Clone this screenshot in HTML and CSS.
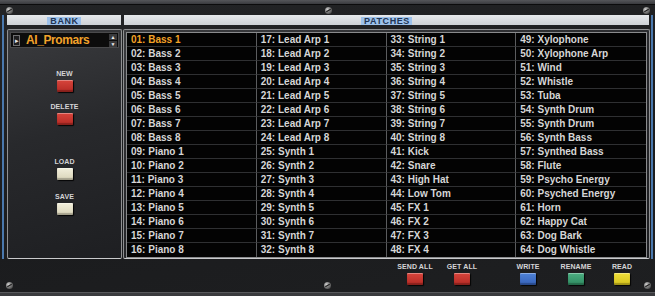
FILE: index.html
```html
<!DOCTYPE html>
<html lang="en">
<head>
    <meta charset="UTF-8">
    <meta name="viewport" content="width=device-width, initial-scale=1.0">
    <title>Promars Librarian</title>
    <link rel="stylesheet" href="styles.css">
</head>
<body>
<div class="device">
    <div class="top-strip"></div>
    <div class="screw-row">
        <span class="screw"></span>
        <span class="screw"></span>
        <span class="screw"></span>
    </div>

    <div class="main">
        <div class="header"><span class="header-label">BANK</span></div>
        <div class="header"><span class="header-label">PATCHES</span></div>

        <!-- Bank panel -->
        <div class="panel bank">
            <div class="bank-select">
                <span class="bank-arrow">&#9656;</span>
                <span class="bank-name">AI_Promars</span>
                <span class="bank-spin">
                    <span class="spin-btn">&#9650;</span>
                    <span class="spin-btn">&#9660;</span>
                </span>
            </div>
            <div class="tool tool-new">
                <span class="tool-label">NEW</span>
                <span class="btn btn-red"></span>
            </div>
            <div class="tool tool-delete">
                <span class="tool-label">DELETE</span>
                <span class="btn btn-red"></span>
            </div>
            <div class="tool tool-load">
                <span class="tool-label">LOAD</span>
                <span class="btn btn-cream"></span>
            </div>
            <div class="tool tool-save">
                <span class="tool-label">SAVE</span>
                <span class="btn btn-cream"></span>
            </div>
        </div>

        <!-- Patch list -->
        <div class="panel patches">
            <div class="patch-grid">
                <div class="patch selected">01: Bass 1</div>
                <div class="patch">02: Bass 2</div>
                <div class="patch">03: Bass 3</div>
                <div class="patch">04: Bass 4</div>
                <div class="patch">05: Bass 5</div>
                <div class="patch">06: Bass 6</div>
                <div class="patch">07: Bass 7</div>
                <div class="patch">08: Bass 8</div>
                <div class="patch">09: Piano 1</div>
                <div class="patch">10: Piano 2</div>
                <div class="patch">11: Piano 3</div>
                <div class="patch">12: Piano 4</div>
                <div class="patch">13: Piano 5</div>
                <div class="patch">14: Piano 6</div>
                <div class="patch">15: Piano 7</div>
                <div class="patch">16: Piano 8</div>

                <div class="patch">17: Lead Arp 1</div>
                <div class="patch">18: Lead Arp 2</div>
                <div class="patch">19: Lead Arp 3</div>
                <div class="patch">20: Lead Arp 4</div>
                <div class="patch">21: Lead Arp 5</div>
                <div class="patch">22: Lead Arp 6</div>
                <div class="patch">23: Lead Arp 7</div>
                <div class="patch">24: Lead Arp 8</div>
                <div class="patch">25: Synth 1</div>
                <div class="patch">26: Synth 2</div>
                <div class="patch">27: Synth 3</div>
                <div class="patch">28: Synth 4</div>
                <div class="patch">29: Synth 5</div>
                <div class="patch">30: Synth 6</div>
                <div class="patch">31: Synth 7</div>
                <div class="patch">32: Synth 8</div>

                <div class="patch">33: String 1</div>
                <div class="patch">34: String 2</div>
                <div class="patch">35: String 3</div>
                <div class="patch">36: String 4</div>
                <div class="patch">37: String 5</div>
                <div class="patch">38: String 6</div>
                <div class="patch">39: String 7</div>
                <div class="patch">40: String 8</div>
                <div class="patch">41: Kick</div>
                <div class="patch">42: Snare</div>
                <div class="patch">43: High Hat</div>
                <div class="patch">44: Low Tom</div>
                <div class="patch">45: FX 1</div>
                <div class="patch">46: FX 2</div>
                <div class="patch">47: FX 3</div>
                <div class="patch">48: FX 4</div>

                <div class="patch">49: Xylophone</div>
                <div class="patch">50: Xylophone Arp</div>
                <div class="patch">51: Wind</div>
                <div class="patch">52: Whistle</div>
                <div class="patch">53: Tuba</div>
                <div class="patch">54: Synth Drum</div>
                <div class="patch">55: Synth Drum</div>
                <div class="patch">56: Synth Bass</div>
                <div class="patch">57: Synthed Bass</div>
                <div class="patch">58: Flute</div>
                <div class="patch">59: Psycho Energy</div>
                <div class="patch">60: Psyched Energy</div>
                <div class="patch">61: Horn</div>
                <div class="patch">62: Happy Cat</div>
                <div class="patch">63: Dog Bark</div>
                <div class="patch">64: Dog Whistle</div>
            </div>
        </div>
    </div>

    <div class="bottom-row">
        <span class="screw"></span>
        <span class="screw screw-mid"></span>
        <div class="tool tool-send">
            <span class="tool-label">SEND ALL</span>
            <span class="btn btn-red"></span>
        </div>
        <div class="tool tool-get">
            <span class="tool-label">GET ALL</span>
            <span class="btn btn-red"></span>
        </div>
        <div class="tool tool-write">
            <span class="tool-label">WRITE</span>
            <span class="btn btn-blue"></span>
        </div>
        <div class="tool tool-rename">
            <span class="tool-label">RENAME</span>
            <span class="btn btn-green"></span>
        </div>
        <div class="tool tool-read">
            <span class="tool-label">READ</span>
            <span class="btn btn-yellow"></span>
        </div>
        <span class="screw screw-end"></span>
    </div>
    <div class="bottom-strip"></div>
</div>
</body>
</html>
```

FILE: styles.css
```css
/* Global */
* {
    margin: 0;
    padding: 0;
    box-sizing: border-box;
    font-family: "Liberation Sans", Arial, sans-serif;
}

body {
    background-color: #1c1d1f;
    width: 655px;
    height: 296px;
    overflow: hidden;
}

.device {
    width: 655px;
    height: 296px;
    display: flex;
    flex-direction: column;
    background: linear-gradient(170deg, #232426 0%, #1b1c1e 60%, #1e1f21 100%);
}

.top-strip {
    height: 5px;
    background: linear-gradient(#55565a, #393a3e);
    border-bottom: 1px solid #0b0b0c;
}

.screw-row {
    height: 10px;
    display: flex;
    justify-content: space-between;
    align-items: center;
    padding: 0 5px 0 6px;
}

/* Screw heads */
.screw {
    position: relative;
    width: 7px;
    height: 7px;
    border-radius: 50%;
    background: radial-gradient(circle at 35% 35%, #d0d0d0 0%, #7c7c7c 45%, #2e2e2e 100%);
    flex-shrink: 0;
}

.screw::after {
    content: "";
    position: absolute;
    left: 1px;
    top: 3px;
    width: 5px;
    height: 1px;
    background: #1a1a1a;
    transform: rotate(-30deg);
}

/* Main area with the blue rails */
.main {
    height: 244px;
    margin: 0 2px;
    border-left: 2px solid #4a78ad;
    border-right: 2px solid #4a78ad;
    padding: 0 1px 0 3px;
    display: grid;
    grid-template-columns: 115px 527px;
    grid-template-rows: 10px 230px;
    column-gap: 1px;
    row-gap: 4px;
}

.header {
    background: linear-gradient(#e6e9ec, #cdd1d5);
    display: flex;
    justify-content: center;
    align-items: flex-end;
    margin-right: 1px;
}

.header:nth-child(2) {
    margin-left: 1px;
}

.header-label {
    height: 8px;
    line-height: 9px;
    padding: 0 2px 0 3px;
    background-color: #9dc1ea;
    color: #223655;
    font-size: 9px;
    font-weight: bold;
    letter-spacing: 0.6px;
    overflow: hidden;
}

.panel {
    border: 1px solid #8f9092;
    border-bottom-color: #c9cacc;
    border-radius: 2px;
    background: linear-gradient(165deg, #3a3b3e 0%, #28292c 45%, #1e1f22 100%);
}

/* Bank panel */
.bank {
    padding: 2px;
    display: flex;
    flex-direction: column;
}

.bank-select {
    height: 16px;
    background-color: #0c0c0c;
    border: 1px solid #4a4a4c;
    display: flex;
    align-items: center;
    padding: 0 1px 0 2px;
}

.bank-arrow {
    width: 7px;
    height: 11px;
    border: 1px solid #6e6e70;
    background: #1e1e20;
    color: #e8e8e8;
    font-size: 7px;
    line-height: 9px;
    text-align: center;
}

.bank-name {
    flex: 1;
    margin-left: 6px;
    color: #f2a22a;
    font-size: 12px;
    font-weight: bold;
    letter-spacing: -0.4px;
}

.bank-spin {
    display: flex;
    flex-direction: column;
    gap: 1px;
}

.spin-btn {
    width: 8px;
    height: 6px;
    background: #3a3a3c;
    color: #f0f0f0;
    font-size: 5px;
    line-height: 6px;
    text-align: center;
}

/* Labelled buttons */
.tool {
    display: flex;
    flex-direction: column;
    align-items: center;
    gap: 2px;
}

.tool-label {
    height: 8px;
    line-height: 8px;
    font-size: 7px;
    font-weight: bold;
    color: #d4d4d6;
    letter-spacing: 0.1px;
    white-space: nowrap;
}

.btn {
    width: 16px;
    height: 12px;
    border-radius: 1px;
    box-shadow: 1px 1px 1px #050505, inset 0 1px 0 rgba(255, 255, 255, 0.35), inset 0 -2px 1px rgba(0, 0, 0, 0.25);
}

.btn-red {
    background: linear-gradient(#d8453c, #b42a24);
}

.btn-cream {
    background: linear-gradient(#f2efdc, #d9d4b8);
}

.btn-blue {
    background: linear-gradient(#4f83d8, #3561b8);
}

.btn-green {
    background: linear-gradient(#4cae82, #2f8a60);
}

.btn-yellow {
    background: linear-gradient(#f0df3a, #d4c21c);
}

.tool-new { margin-top: 22px; }
.tool-delete { margin-top: 11px; }
.tool-load { margin-top: 33px; }
.tool-save { margin-top: 13px; }

/* Patch grid */
.patches {
    padding: 2px 2px 0;
}

.patch-grid {
    border: 1px solid #8a8b8d;
    background-color: #030303;
    display: grid;
    grid-template-columns: repeat(4, 1fr);
    grid-template-rows: repeat(16, 14px);
    grid-auto-flow: column;
}

.patch {
    border-bottom: 1px solid #2f3032;
    border-right: 1px solid #5b5c5e;
    padding-left: 4px;
    line-height: 13px;
    font-size: 10px;
    font-weight: bold;
    color: #d6d6d6;
    white-space: nowrap;
    overflow: hidden;
}

.patch:nth-child(16n) {
    border-bottom: none;
}

.patch:nth-child(n+49) {
    border-right: none;
}

.patch.selected {
    color: #f2a227;
}

/* Bottom controls */
.bottom-row {
    height: 33px;
    display: flex;
    align-items: flex-start;
    padding-left: 6px;
}

.bottom-row .screw {
    margin-top: 23px;
}

.bottom-row .screw-mid {
    margin-left: 311px;
}

.bottom-row .tool {
    width: 40px;
    margin-top: 4px;
}

.tool-send { margin-left: 64px; }
.tool-get { margin-left: 7px; }
.tool-write { margin-left: 26px; }
.tool-rename { margin-left: 8px; }
.tool-read { margin-left: 6px; }

.bottom-row .screw-end {
    margin-left: 2px;
}

.bottom-strip {
    height: 4px;
    background: #3a3b3e;
    border-top: 1px solid #58595c;
}
```
